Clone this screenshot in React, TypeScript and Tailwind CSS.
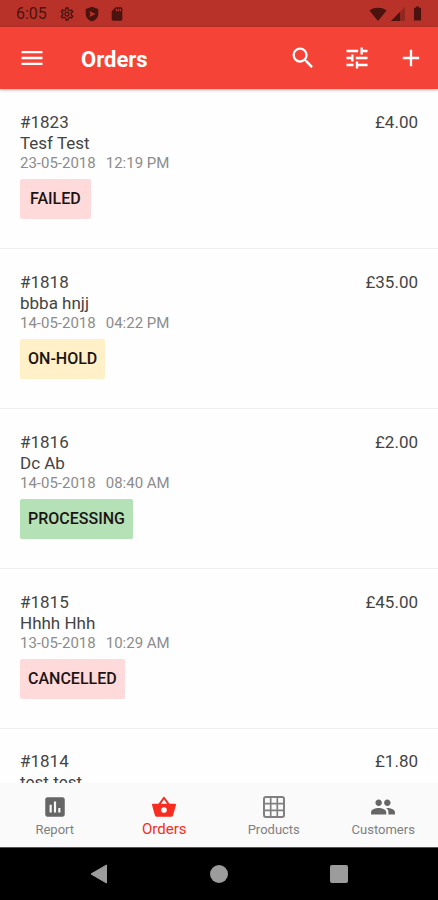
import {
  MdAdd,
  MdAssessment,
  MdBatteryFull,
  MdMenu,
  MdOutlineSettings,
  MdPeople,
  MdSdCard,
  MdSearch,
  MdTune,
} from "react-icons/md";

type Status = "FAILED" | "ON-HOLD" | "PROCESSING" | "CANCELLED";

type Order = {
  id: string;
  customer: string;
  date: string;
  time: string;
  total: string;
  status: Status;
};

const orders: Order[] = [
  { id: "#1823", customer: "Tesf Test", date: "23-05-2018", time: "12:19 PM", total: "£4.00", status: "FAILED" },
  { id: "#1818", customer: "bbba hnjj", date: "14-05-2018", time: "04:22 PM", total: "£35.00", status: "ON-HOLD" },
  { id: "#1816", customer: "Dc Ab", date: "14-05-2018", time: "08:40 AM", total: "£2.00", status: "PROCESSING" },
  { id: "#1815", customer: "Hhhh Hhh", date: "13-05-2018", time: "10:29 AM", total: "£45.00", status: "CANCELLED" },
];

const nextOrder = { id: "#1814", customer: "test test", total: "£1.80" };

const badgeColors: Record<Status, string> = {
  FAILED: "bg-[#ffdada] px-[10px]",
  "ON-HOLD": "bg-[#fff0c8] px-2",
  PROCESSING: "bg-[#b5e1b7] px-2",
  CANCELLED: "bg-[#ffdada] px-2",
};

function ShieldIcon() {
  return (
    <svg viewBox="0 0 24 24" className="size-4" fill="currentColor" aria-hidden="true">
      <path
        fillRule="evenodd"
        d="M12 1 2.500 4.500v7c0 5.300 4 9.900 9.500 11.500 5.500-1.600 9.500-6.200 9.500-11.500v-7L12 1Zm-4 6.500 9.500 4.500L8 16.500l1.500-4.500L8 7.500Z"
      />
    </svg>
  );
}

function WifiIcon() {
  return (
    <svg viewBox="0 0 18 14" className="h-[14px] w-[18px]" fill="currentColor" aria-hidden="true">
      <path d="M9 14 .5 3.500C3 1.500 6 .8 9 .8s6 .7 8.500 2.700L9 14Z" />
    </svg>
  );
}

function SignalIcon() {
  return (
    <svg viewBox="0 0 14 14" className="size-[14px]" fill="currentColor" aria-hidden="true">
      <path d="M14 0v14H0L14 0Z" opacity=".35" />
      <path d="M9 5v9H0l9-9Z" />
    </svg>
  );
}

function BasketIcon() {
  return (
    <svg viewBox="0 0 24 24" className="size-[26px]" fill="currentColor" aria-hidden="true">
      <path d="M7 10.500 12 3.500l5 7" fill="none" stroke="currentColor" strokeWidth="1.800" strokeLinejoin="round" />
      <path
        fillRule="evenodd"
        d="M2 9h20a1 1 0 0 1 1 1.300l-2.600 9.200A2 2 0 0 1 18.500 21h-13a2 2 0 0 1-1.900-1.500L1 10.300A1 1 0 0 1 2 9Zm10 3.200a2.600 2.600 0 1 0 0 5.200 2.600 2.600 0 0 0 0-5.200Z"
      />
    </svg>
  );
}

function GridIcon() {
  return (
    <svg viewBox="0 0 26 26" className="size-[26px]" fill="none" stroke="currentColor" aria-hidden="true">
      <rect x="3" y="3" width="20" height="20" rx="2" strokeWidth="2" />
      <path d="M9.700 3v20M16.300 3v20M3 9.700h20M3 16.300h20" strokeWidth="1.700" />
    </svg>
  );
}

function StatusBar() {
  return (
    <div className="flex h-[27px] shrink-0 items-center justify-between bg-[#b93229] pr-3 pl-4 text-[#4a130f]">
      <div className="flex items-center">
        <span className="w-[43px] text-base">6:05</span>
        <div className="flex items-center gap-[9px]">
          <MdOutlineSettings className="size-4" />
          <ShieldIcon />
          <MdSdCard className="size-4" />
        </div>
      </div>
      <div className="flex items-center gap-1">
        <WifiIcon />
        <SignalIcon />
        <MdBatteryFull className="size-[17px]" />
      </div>
    </div>
  );
}

function AppBar() {
  return (
    <header className="z-10 flex h-[62px] shrink-0 items-center bg-[#f54437] pr-[13px] pl-[18px] text-white shadow-[0_1px_3px_rgba(0,0,0,0.3)]">
      <button type="button" aria-label="Menu">
        <MdMenu className="size-7" />
      </button>
      <h1 className="flex-1 pt-1 pl-[35px] text-[22px] leading-7 font-bold">Orders</h1>
      <div className="flex items-center gap-[26px]">
        <button type="button" aria-label="Search">
          <MdSearch className="size-7" />
        </button>
        <button type="button" aria-label="Filter">
          <MdTune className="size-7" />
        </button>
        <button type="button" aria-label="Add order">
          <MdAdd className="size-7" />
        </button>
      </div>
    </header>
  );
}

function OrderRow({ order }: { order: Order }) {
  return (
    <li className="flex items-start justify-between border-b border-[#f0f0f0] px-5 pt-[23px] pb-[29px]">
      <div className="text-[#444]">
        <p className="text-[17px] leading-[21px]">{order.id}</p>
        <p className="text-[17px] leading-[21px]">{order.customer}</p>
        <p className="flex gap-[10px] text-[15px] leading-[19px] text-[#8c8c8c]">
          <span>{order.date}</span>
          <span>{order.time}</span>
        </p>
        <span
          className={`mt-[6px] inline-flex h-10 items-center rounded-xs align-top text-base font-medium text-[#1c1414] ${badgeColors[order.status]}`}
        >
          {order.status}
        </span>
      </div>
      <p className="text-[17px] leading-[21px] text-[#444]">{order.total}</p>
    </li>
  );
}

function BottomNav() {
  return (
    <nav className="grid h-16 shrink-0 grid-cols-4 bg-[#fafafa] text-[13px] leading-4 text-[#808080]">
      <a href="#report" className="flex flex-col items-center gap-[2px] pt-[11px]">
        <MdAssessment className="size-[26px] text-[#666]" />
        Report
      </a>
      <a href="#orders" aria-current="page" className="flex flex-col items-center gap-px pt-[11px] text-[15px] text-[#f62d20]">
        <BasketIcon />
        Orders
      </a>
      <a href="#products" className="flex flex-col items-center gap-[2px] pt-[11px]">
        <GridIcon />
        Products
      </a>
      <a href="#customers" className="flex flex-col items-center gap-[2px] pt-[11px]">
        <MdPeople className="size-[26px] text-[#666]" />
        Customers
      </a>
    </nav>
  );
}

function SystemNav() {
  return (
    <div className="flex h-[53px] shrink-0 items-center justify-center gap-[102px] border-t border-[#555] bg-black text-[#9c9c9c]">
      <button type="button" aria-label="Back">
        <svg viewBox="0 0 18 20" className="h-5 w-[18px]" fill="currentColor">
          <path d="M16.500 1v18L1 10 16.500 1Z" stroke="currentColor" strokeLinejoin="round" />
        </svg>
      </button>
      <button type="button" aria-label="Home" className="size-[18px] rounded-full bg-[#9c9c9c]" />
      <button type="button" aria-label="Recent apps" className="size-[18px] rounded-xs bg-[#9c9c9c]" />
    </div>
  );
}

export default function App() {
  return (
    <div className="flex h-screen flex-col bg-[#fefefe] font-['Roboto',sans-serif]">
      <StatusBar />
      <AppBar />
      <main className="min-h-0 flex-1 overflow-hidden">
        <ul>
          {orders.map((order) => (
            <OrderRow key={order.id} order={order} />
          ))}
          <li className="flex items-start justify-between px-5 pt-[22px] text-[17px] leading-[21px] text-[#444]">
            <div>
              <p>{nextOrder.id}</p>
              <p>{nextOrder.customer}</p>
            </div>
            <p>{nextOrder.total}</p>
          </li>
        </ul>
      </main>
      <BottomNav />
      <SystemNav />
    </div>
  );
}
